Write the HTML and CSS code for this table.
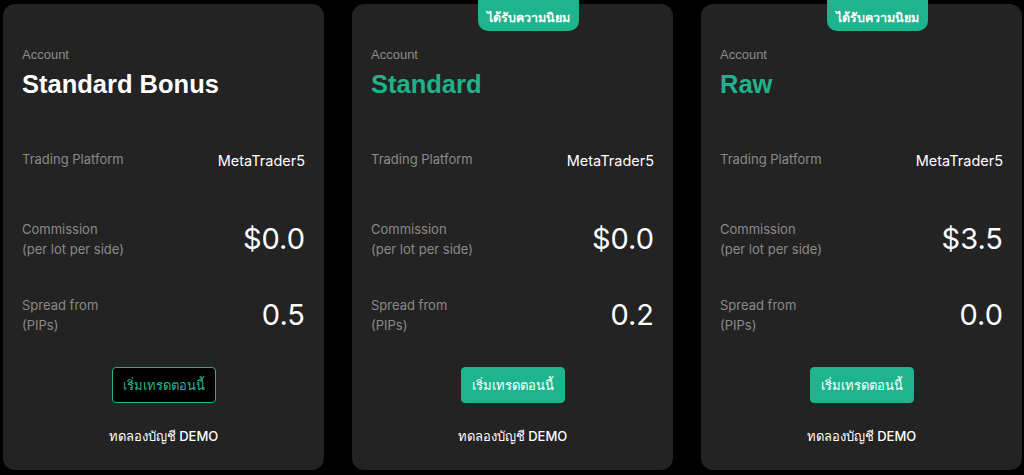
FILE: index.html
```html
<!DOCTYPE html>
<html lang="th">
<head>
<meta charset="utf-8">
<link rel="stylesheet" href="styles.css">
</head>
<body>
<div class="cards">
  <div class="card">
    <div class="label">Account</div>
    <div class="title">Standard Bonus</div>
    <div class="row platform"><div class="lbl">Trading Platform</div><div class="pval">MetaTrader5</div></div>
    <div class="row comm"><div class="lbl">Commission<br>(per lot per side)</div><div class="val">$0.0</div></div>
    <div class="row spread"><div class="lbl">Spread from<br>(PIPs)</div><div class="val">0.5</div></div>
    <div class="btn outline">เริ่มเทรดตอนนี้</div>
    <div class="demo">ทดลองบัญชี DEMO</div>
  </div>
  <div class="card">
    <div class="badge">ได้รับความนิยม</div>
    <div class="label">Account</div>
    <div class="title green">Standard</div>
    <div class="row platform"><div class="lbl">Trading Platform</div><div class="pval">MetaTrader5</div></div>
    <div class="row comm"><div class="lbl">Commission<br>(per lot per side)</div><div class="val">$0.0</div></div>
    <div class="row spread"><div class="lbl">Spread from<br>(PIPs)</div><div class="val">0.2</div></div>
    <div class="btn">เริ่มเทรดตอนนี้</div>
    <div class="demo">ทดลองบัญชี DEMO</div>
  </div>
  <div class="card">
    <div class="badge">ได้รับความนิยม</div>
    <div class="label">Account</div>
    <div class="title green">Raw</div>
    <div class="row platform"><div class="lbl">Trading Platform</div><div class="pval">MetaTrader5</div></div>
    <div class="row comm"><div class="lbl">Commission<br>(per lot per side)</div><div class="val">$3.5</div></div>
    <div class="row spread"><div class="lbl">Spread from<br>(PIPs)</div><div class="val">0.0</div></div>
    <div class="btn">เริ่มเทรดตอนนี้</div>
    <div class="demo">ทดลองบัญชี DEMO</div>
  </div>
</div>
</body>
</html>
```
FILE: styles.css
```css
html, body {
  margin: 0;
  background: #000;
}
body {
  font-family: Inter, "Noto Sans", sans-serif;
  color: #fff;
}
.cards {
  display: flex;
  gap: 28px;
  padding: 4px 2px 4px 3px;
}
.card {
  position: relative;
  width: 321px;
  box-sizing: border-box;
  background: #232323;
  border-radius: 12px;
  padding: 41px 19px 24px 19px;
  display: flex;
  flex-direction: column;
}
.badge {
  position: absolute;
  top: -4px;
  left: 126px;
  width: 101px;
  height: 31px;
  box-sizing: border-box;
  padding-top: 4px;
  background: #1db48e;
  border-radius: 0 0 10px 10px;
  color: #fff;
  font-weight: 700;
  font-size: 12.5px;
  line-height: 27px;
  text-align: center;
}
.label {
  font-family: "Liberation Sans", Arial, sans-serif;
  font-size: 13px;
  line-height: 20px;
  color: #8c8c8c;
}
.title {
  margin-top: 4px;
  font-family: "Liberation Sans", Arial, sans-serif;
  font-weight: 700;
  font-size: 25.5px;
  line-height: 30px;
  color: #fff;
}
.title.green {
  color: #20b38b;
}
.row {
  display: flex;
  justify-content: space-between;
  align-items: center;
}
.lbl {
  font-size: 13px;
  line-height: 20px;
  color: #8a8a8a;
}
.platform {
  margin-top: 50px;
}
.pval {
  font-size: 14.5px;
  font-weight: 400;
  color: #fff;
  margin-top: 2px;
}
.comm {
  margin-top: 50px;
}
.spread {
  margin-top: 36px;
}
.val {
  font-size: 29px;
  font-weight: 400;
  color: #fff;
  line-height: 36px;
}
.btn {
  margin-top: 32px;
  align-self: center;
  width: 104px;
  height: 36px;
  box-sizing: border-box;
  background: #1db48e;
  border: 1px solid #1db48e;
  border-radius: 4px;
  color: #fff;
  font-size: 13px;
  font-weight: 500;
  line-height: 34px;
  text-align: center;
}
.btn.outline {
  background: #000;
  color: #22b88f;
}
.demo {
  margin-top: 23px;
  align-self: center;
  font-size: 13px;
  font-weight: 500;
  line-height: 20px;
  color: #fff;
}
```
